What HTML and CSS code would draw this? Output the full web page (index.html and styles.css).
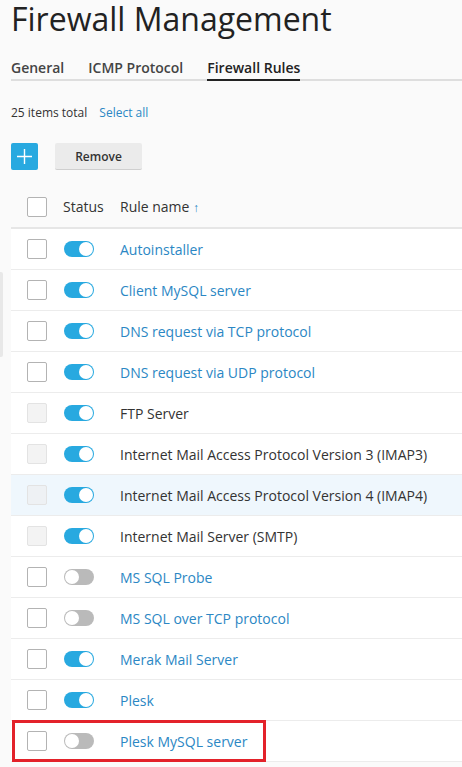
FILE: index.html
```html
<!DOCTYPE html>
<html lang="en">
<head>
<meta charset="utf-8">
<title>Firewall Management</title>
<link rel="stylesheet" href="styles.css">
</head>
<body>
<div class="page">
  <h1 class="title">Firewall Management</h1>
  <nav class="tabs">
    <a class="tab">General</a>
    <a class="tab">ICMP Protocol</a>
    <a class="tab active">Firewall Rules</a>
  </nav>
  <div class="summary">
    <span>25 items total</span>
    <a class="link">Select all</a>
  </div>
  <div class="toolbar">
    <button class="btn-add" aria-label="Add">
      <svg width="15" height="15" viewBox="0 0 15 15"><path d="M7.5 0v15M0 7.5h15" stroke="#fff" stroke-width="1.4" fill="none"/></svg>
    </button>
    <button class="btn">Remove</button>
  </div>
  <div class="table">
    <div class="row head">
      <span class="cell-cb"><span class="cb"></span></span>
      <span class="cell-status">Status</span>
      <span class="cell-name">Rule name <span class="arrow">↑</span></span>
    </div>
    <div class="row"><span class="cell-cb"><span class="cb"></span></span><span class="cell-status"><span class="toggle"></span></span><span class="cell-name"><a class="link">Autoinstaller</a></span></div>
    <div class="row"><span class="cell-cb"><span class="cb"></span></span><span class="cell-status"><span class="toggle"></span></span><span class="cell-name"><a class="link">Client MySQL server</a></span></div>
    <div class="row"><span class="cell-cb"><span class="cb"></span></span><span class="cell-status"><span class="toggle"></span></span><span class="cell-name"><a class="link">DNS request via TCP protocol</a></span></div>
    <div class="row"><span class="cell-cb"><span class="cb"></span></span><span class="cell-status"><span class="toggle"></span></span><span class="cell-name"><a class="link">DNS request via UDP protocol</a></span></div>
    <div class="row"><span class="cell-cb"><span class="cb disabled"></span></span><span class="cell-status"><span class="toggle"></span></span><span class="cell-name">FTP Server</span></div>
    <div class="row"><span class="cell-cb"><span class="cb disabled"></span></span><span class="cell-status"><span class="toggle"></span></span><span class="cell-name">Internet Mail Access Protocol Version 3 (IMAP3)</span></div>
    <div class="row hover"><span class="cell-cb"><span class="cb disabled"></span></span><span class="cell-status"><span class="toggle"></span></span><span class="cell-name">Internet Mail Access Protocol Version 4 (IMAP4)</span></div>
    <div class="row"><span class="cell-cb"><span class="cb disabled"></span></span><span class="cell-status"><span class="toggle"></span></span><span class="cell-name">Internet Mail Server (SMTP)</span></div>
    <div class="row"><span class="cell-cb"><span class="cb"></span></span><span class="cell-status"><span class="toggle off"></span></span><span class="cell-name"><a class="link">MS SQL Probe</a></span></div>
    <div class="row"><span class="cell-cb"><span class="cb"></span></span><span class="cell-status"><span class="toggle off"></span></span><span class="cell-name"><a class="link">MS SQL over TCP protocol</a></span></div>
    <div class="row"><span class="cell-cb"><span class="cb"></span></span><span class="cell-status"><span class="toggle"></span></span><span class="cell-name"><a class="link">Merak Mail Server</a></span></div>
    <div class="row"><span class="cell-cb"><span class="cb"></span></span><span class="cell-status"><span class="toggle"></span></span><span class="cell-name"><a class="link">Plesk</a></span></div>
    <div class="row marked"><span class="cell-cb"><span class="cb"></span></span><span class="cell-status"><span class="toggle off"></span></span><span class="cell-name"><a class="link">Plesk MySQL server</a></span><span class="highlight-box"></span></div>
  </div>
</div>
<div class="side-handle"></div>
<div class="bottom-bar"></div>
</body>
</html>
```

FILE: styles.css
```css
html, body {
  margin: 0;
  padding: 0;
  background: #fafafa;
  overflow: hidden;
}
body {
  font-family: "Open Sans", "Liberation Sans", sans-serif;
  color: #333;
  width: 462px;
  height: 767px;
}
.page {
  padding-left: 11px;
}
.title {
  margin: 0;
  padding-top: 1px;
  font-size: 32px;
  line-height: 36px;
  font-weight: 400;
  color: #222;
}
.tabs {
  margin-top: 21px;
  display: flex;
  gap: 24px;
  border-bottom: 2px solid #dedede;
}
.tab {
  font-size: 14px;
  font-weight: 600;
  line-height: 20px;
  color: #444;
  padding-bottom: 1px;
  margin-bottom: -2px;
  border-bottom: 2px solid transparent;
}
.tab.active {
  color: #222;
  border-bottom-color: #222;
}
.summary {
  margin-top: 24px;
  display: flex;
  gap: 12px;
  font-size: 12px;
  line-height: 16px;
  color: #333;
}
.link {
  color: #2b87c4;
}
.toolbar {
  margin-top: 22px;
  display: flex;
  gap: 17px;
}
.btn-add {
  width: 27px;
  height: 27px;
  border: 0;
  border-radius: 2px;
  background: #28a9e0;
  display: flex;
  align-items: center;
  justify-content: center;
  padding: 0;
}
.btn {
  width: 87px;
  height: 27px;
  border: 0;
  border-bottom: 1px solid #cfcfcf;
  border-radius: 2px;
  background: #ebebeb;
  font-family: inherit;
  font-size: 12px;
  font-weight: 600;
  color: #333;
  padding: 0;
}
.table {
  margin-top: 16px;
}
.row {
  display: grid;
  grid-template-columns: 37px 56px 1fr;
  align-items: center;
  height: 40px;
  padding-left: 16px;
  background: #fff;
  border-bottom: 1px solid #ececec;
  font-size: 14px;
  white-space: nowrap;
  position: relative;
}
.row.head {
  height: 41px;
  background: #fafafa;
  border-bottom: 2px solid #e6e6e6;
  color: #333;
}
.row.head .cell-status {
  margin-left: -1px;
}
.row.hover {
  background: #eff7fd;
}
.cb {
  display: block;
  width: 20px;
  height: 20px;
  box-sizing: border-box;
  border: 1px solid #b3b3b3;
  border-radius: 2px;
  background: #fff;
}
.cb.disabled {
  background: #f3f3f3;
  border-color: #e3e3e3;
}
.row.hover .cb.disabled {
  background: #eef1f4;
}
.toggle {
  display: block;
  width: 30px;
  height: 16px;
  border-radius: 8px;
  background: #28a9e0;
  position: relative;
}
.toggle::after {
  content: "";
  position: absolute;
  top: 1px;
  right: 1px;
  width: 14px;
  height: 14px;
  border-radius: 50%;
  background: #fff;
}
.toggle.off {
  background: #bababa;
}
.toggle.off::after {
  right: auto;
  left: 1px;
}
.arrow {
  color: #2b87c4;
  font-size: 12px;
}
.highlight-box {
  position: absolute;
  left: 1px;
  top: -1px;
  width: 254px;
  height: 42px;
  box-sizing: border-box;
  border: 3px solid #e3222a;
  pointer-events: none;
}
.side-handle {
  position: fixed;
  left: 0;
  top: 272px;
  width: 3px;
  height: 85px;
  background: #e8e8e8;
  border-radius: 0 2px 2px 0;
}
.bottom-bar {
  position: fixed;
  left: 0;
  right: 0;
  top: 759px;
  height: 8px;
  background: #dedede;
  border-top: 1px solid #8a8a8a;
  z-index: -1;
}
```
